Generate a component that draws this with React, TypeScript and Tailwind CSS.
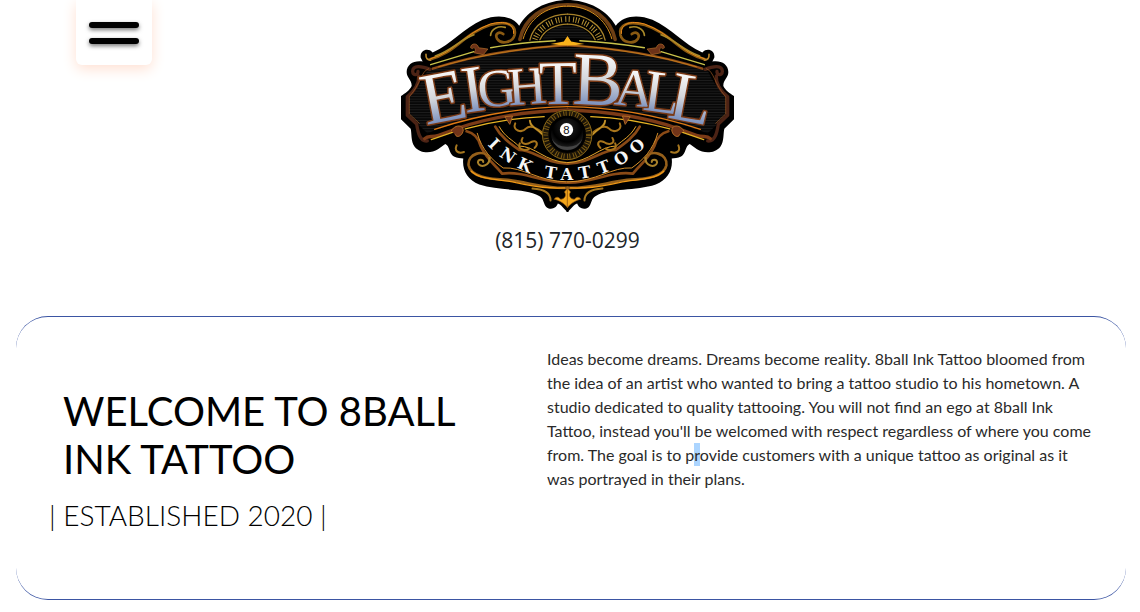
const LETTERS = [
  { c: "E", x: 158, y: 362, r: -11, s: 220 },
  { c: "I", x: 242, y: 334, r: -8, s: 200 },
  { c: "G", x: 310, y: 318, r: -6, s: 160 },
  { c: "H", x: 399, y: 312, r: -4, s: 160 },
  { c: "T", x: 490, y: 312, r: -1, s: 186 },
  { c: "B", x: 606, y: 314, r: 2, s: 226 },
  { c: "A", x: 713, y: 318, r: 5, s: 160 },
  { c: "L", x: 794, y: 336, r: 8, s: 178 },
  { c: "L", x: 876, y: 364, r: 11, s: 208 },
];

const RIBBON = [
  { c: "I", a: 45 },
  { c: "N", a: 35 },
  { c: "K", a: 24 },
  { c: "T", a: 9 },
  { c: "A", a: 0 },
  { c: "T", a: -10 },
  { c: "T", a: -21 },
  { c: "O", a: -32 },
  { c: "O", a: -43 },
];

function HalfOrnament() {
  return (
    <g fill="none" strokeLinecap="round" strokeLinejoin="round">
      {/* top scroll */}
      <path d="M104 178C180 160 205 100 285 75C335 60 365 75 358 105C352 128 318 134 306 117C297 101 312 92 324 102" stroke="#8a5a12" strokeWidth="8" />
      <path d="M106 176C180 156 208 100 285 72C330 60 358 72 355 100" stroke="#f08c1a" strokeWidth="3" />
      <path d="M286 106C288 84 312 76 330 82M120 168C170 150 196 118 236 104" stroke="#a98a2a" strokeWidth="5" />
      <path d="M92 163Q91 180 106 180" stroke="#b8862b" strokeWidth="5" />
      {/* upper rails */}
      <path d="M106 194L236 155M286 143Q390 126 480 122" stroke="#c9c24a" strokeWidth="4" />
      <path d="M112 206Q290 148 517 136" stroke="#8c4a17" strokeWidth="7" />
      <path d="M130 200Q300 150 517 134" stroke="#d9901c" strokeWidth="2" />
      <path d="M226 142C226 128 248 128 250 143L278 147L264 164L236 158C246 148 236 138 232 145Z" fill="#6d3218" stroke="#b5702a" strokeWidth="2" />
      {/* side frame */}
      <path d="M104 208C80 198 52 194 52 214C53 230 70 224 68 214M70 228C72 250 62 268 36 290V346L64 372C68 398 74 426 96 423" stroke="#4c2315" strokeWidth="10" />
      <path d="M100 206C76 214 78 250 42 290V342L72 370" stroke="#a35a24" strokeWidth="2" />
      {/* lower rails */}
      <path d="M88 416C100 404 108 414 130 406L190 384Q330 336 517 330" stroke="#7c3b17" strokeWidth="10" />
      <path d="M118 388Q320 322 517 320" stroke="#e07a13" strokeWidth="4" />
      <path d="M108 419L178 395M210 387Q330 354 447 350" stroke="#e6b324" strokeWidth="4" />
      <path d="M168 393C176 375 202 372 204 390C202 408 184 416 180 404M330 350L352 348L344 372Z" fill="#713419" stroke="#b16a25" strokeWidth="3" />
      {/* ribbon edges */}
      <path d="M214 394C238 400 250 414 256 438C276 482 306 500 320 521C390 512 442 550 517 548" stroke="#8a4a16" strokeWidth="8" />
      <path d="M246 400C260 450 290 480 324 504C382 500 430 545 517 546" stroke="#d8912a" strokeWidth="3" />
      <path d="M300 380C316 410 344 430 372 450C414 450 450 490 517 491" stroke="#8a4a16" strokeWidth="8" />
      <path d="M312 380C330 412 350 418 370 438C420 438 450 486 517 488" stroke="#e7a72c" strokeWidth="3" />
      {/* inner scrolls */}
      <path d="M360 370C350 392 380 400 392 386C404 374 426 386 440 397M404 362C406 384 424 382 442 404M382 414C372 430 390 438 408 426C426 418 430 434 418 444M374 430C364 446 388 456 402 446" stroke="#a8751c" strokeWidth="6" />
      <path d="M404 362C406 384 424 382 442 404" stroke="#dfb93b" strokeWidth="2" />
      {/* outer scrolls */}
      <path d="M284 474C264 446 216 462 220 496C226 530 278 538 338 540C410 550 448 566 517 564" stroke="#96601a" strokeWidth="8" />
      <path d="M282 474C286 498 252 506 248 488C248 476 264 478 264 486" stroke="#a8812a" strokeWidth="6" />
      <path d="M228 514C262 544 316 536 362 548C430 562 460 566 508 564" stroke="#f29a16" strokeWidth="4" />
      <path d="M184 436C176 454 190 462 206 456M412 566C448 568 466 580 466 602" stroke="#a5761f" strokeWidth="6" />
      {/* crown arch */}
      <path d="M374 118C388 56 442 14 517 14" stroke="#6e3f14" strokeWidth="11" />
      <path d="M384 116C400 58 450 18 517 18" stroke="#dc931e" strokeWidth="3" />
      <path d="M404 120C414 72 466 42 517 42M434 119C448 88 484 72 517 72" stroke="#a5812a" strokeWidth="4" />
      <path d="M419 118C432 80 474 57 517 57" stroke="#b59234" strokeWidth="17" strokeDasharray="3 5 3 5 3 10" strokeLinecap="butt" />
      {/* bottom finial */}
      <path d="M517 566L508 576C516 586 508 598 496 598C490 590 482 590 477 598C488 600 502 606 517 622Z" fill="#f2a61b" stroke="#a36110" strokeWidth="2" />
    </g>
  );
}

function Logo() {
  return (
    <svg viewBox="17 0 1000 636" className="h-[212px] w-[333px]" role="img" aria-label="Eight Ball Ink Tattoo">
      <defs>
        <linearGradient id="steel" x1="0" y1="0" x2="0" y2="1">
          <stop offset="0.2" stopColor="#f8f8f8" />
          <stop offset="0.5" stopColor="#d5d7db" />
          <stop offset="0.8" stopColor="#7f93bf" />
        </linearGradient>
        <pattern id="lines" width="12" height="8" patternUnits="userSpaceOnUse">
          <rect width="12" height="8" fill="#080808" />
          <rect width="12" height="2" fill="#242424" />
        </pattern>
        <radialGradient id="ball" cx="0.5" cy="0.3" r="0.7">
          <stop offset="0" stopColor="#222" />
          <stop offset="0.6" stopColor="#000" />
          <stop offset="1" stopColor="#333" />
        </radialGradient>
        <path id="half" d="M520 0C452 0 398 32 372 77C350 46 305 42 262 59C205 84 170 132 112 157C98 142 74 150 76 172L82 184C56 180 34 192 34 216C34 234 50 240 49 258C44 270 30 280 17 288V358L46 386C50 402 46 422 58 440C76 462 108 460 128 448L150 432C164 438 160 460 176 470C186 476 196 474 204 476C200 510 216 538 252 554C312 574 390 564 432 588C446 594 444 612 454 622C468 632 484 624 488 611C498 614 506 628 517 636H520Z" />
        <g id="ornament">
          <HalfOrnament />
        </g>
      </defs>
      <use href="#half" />
      <use href="#half" transform="translate(1034 0) scale(-1 1)" />
      <path d="M440 118C458 86 488 76 517 76S576 86 594 118Q517 110 440 118Z" fill="url(#lines)" />
      <path d="M96 212Q300 145 517 143T938 212Q960 262 996 292V344L938 400Q730 324 517 320T96 400L40 344V292Q74 262 96 212Z" fill="url(#lines)" />
      <use href="#ornament" />
      <use href="#ornament" transform="translate(1034 0) scale(-1 1)" />
      <path d="M517 108L528 124L568 132Q517 140 466 132L506 124Z" fill="#f9b11b" />

      <g textAnchor="middle" strokeLinejoin="round">
        {LETTERS.map((l, i) => (
          <g key={i} transform={`rotate(${l.r} ${l.x} ${l.y})`} fontFamily="'Liberation Serif', serif" fontSize={l.s}>
            <text
              x={l.x}
              y={l.y}
              fill="url(#steel)"
              stroke="#7a3a16"
              strokeWidth="9"
              paintOrder="stroke"
            >
              {l.c}
            </text>
          </g>
        ))}
        {RIBBON.map((l, i) => (
          <text
            key={i}
            x="515"
            y="539"
            fontFamily="'DejaVu Serif', serif"
            fontSize="49"
            fontWeight="bold"
            fill="#f5f5f5"
            transform={`rotate(${l.a} 515 213)`}
          >
            {l.c}
          </text>
        ))}
      </g>

      <circle cx="516" cy="405" r="76" fill="#1b1408" />
      <circle cx="516" cy="405" r="74" fill="none" stroke="#8f6a17" strokeWidth="3" />
      <circle cx="516" cy="405" r="64" fill="none" stroke="#7d5c14" strokeWidth="15" strokeDasharray="3 4 3 8" />
      <circle cx="516" cy="403" r="52" fill="url(#ball)" stroke="#000" strokeWidth="8" />
      <path d="M470 416A48 48 0 0 0 562 416A50 40 0 0 1 470 416Z" fill="#454545" />
      <circle cx="514" cy="389" r="20" fill="#fff" />
      <text x="514" y="401" fontSize="34" textAnchor="middle" fontFamily="'Liberation Sans', sans-serif" fill="#111">
        8
      </text>
    </svg>
  );
}

export default function App() {
  return (
    <div className="bg-white font-['Lato',sans-serif] text-black">
      <header className="grid grid-cols-[1fr_auto_1fr] items-start pr-[5px]">
        <button
          type="button"
          aria-label="Open menu"
          className="ml-[76px] flex h-[65px] w-[76px] flex-col items-center justify-end gap-2.5 rounded-b-md bg-white pb-[21px] shadow-[0_4px_14px_#ffe0d2]"
        >
          <span className="h-1.5 w-[50px] rounded-full bg-black shadow-[0_2px_4px_#777]" />
          <span className="h-1.5 w-[50px] rounded-full bg-black shadow-[0_2px_4px_#777]" />
        </button>
        <div className="flex flex-col items-center">
          <Logo />
          <a href="tel:8157700299" className="mt-4 font-['Open_Sans',sans-serif] text-[21px] leading-6 text-[#212529]">
            (815) 770-0299
          </a>
        </div>
      </header>

      <main className="mt-16 ml-4 mr-3.5 grid min-h-[284px] grid-cols-[483fr_627fr] rounded-[32px] border-y border-[#3b55a3]">
        <section className="pt-[70px] pl-[33px]">
          <h1 className="pl-3.5 text-[40px] leading-[48px]">
            WELCOME TO 8BALL
            <br />
            INK TATTOO
          </h1>
          <p className="mt-4 text-[28px] leading-8 font-light">| ESTABLISHED 2020 |</p>
        </section>
        <p className="pt-[30px] pr-7 pl-12 text-base leading-6 text-[#2a2a2a]">
          Ideas become dreams. Dreams become reality. 8ball Ink Tattoo bloomed from the idea of an artist who wanted to
          bring a tattoo studio to his hometown. A studio dedicated to quality tattooing. You will not find an ego at
          8ball Ink Tattoo, instead you'll be welcomed with respect regardless of where you come from. The goal is to p
          <mark className="bg-[#acd5ff] py-0.5 text-[#2a2a2a]">r</mark>ovide customers with a unique tattoo as original
          as it was portrayed in their plans.
        </p>
      </main>
    </div>
  );
}
